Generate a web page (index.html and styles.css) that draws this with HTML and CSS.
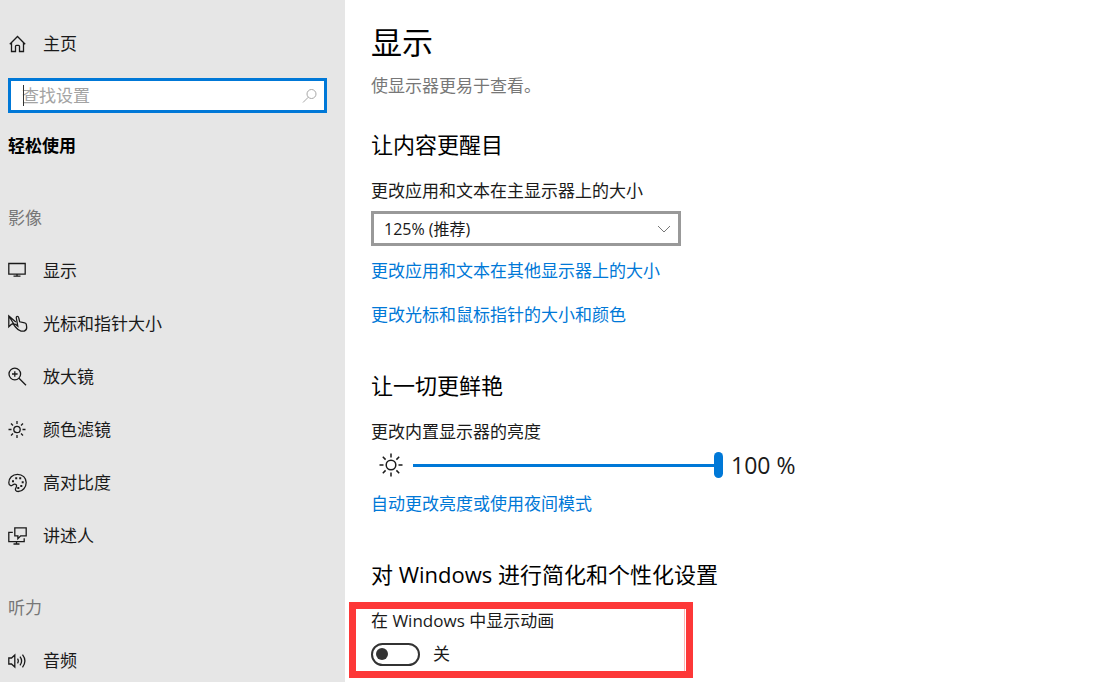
FILE: index.html
```html
<!DOCTYPE html>
<html lang="zh-CN">
<head>
    <meta charset="UTF-8">
    <meta name="viewport" content="width=device-width, initial-scale=1.0">
    <title>设置</title>
    <link rel="stylesheet" href="styles.css">
</head>
<body>
    <div class="settings">
        <nav class="sidebar">
            <a href="#" class="nav-item">
                <svg class="icon" viewBox="0 0 20 20"><path d="M1.8 10.2 9.5 2.5l7.7 7.7M3.5 8.8v8.7h4v-5.2q0-1 1-1h2q1 0 1 1v5.2h4V8.8"/></svg>
                <span>主页</span>
            </a>

            <div class="search-box">
                <input type="text" class="search-input" placeholder="查找设置" aria-label="查找设置">
                <svg class="search-icon" viewBox="0 0 16 16"><circle cx="9.5" cy="6" r="4.5"/><path d="M6.3 9.2 1 14.5"/></svg>
            </div>

            <h2 class="sidebar-title">轻松使用</h2>

            <h3 class="group-title">影像</h3>
            <ul class="nav-list">
                <li><a href="#" class="nav-item">
                    <svg class="icon" viewBox="0 0 20 20"><path d="M.8 2.5h16.4v10.7H.8zM9 13.2v2M5.5 15.2h7"/></svg>
                    <span>显示</span>
                </a></li>
                <li><a href="#" class="nav-item">
                    <svg class="icon" viewBox="0 0 20 20"><path d="M7.8 8 .8 2v10.8l2.7-2.6M.8 2l5 8H3.5"/><path d="M7.5 13 5.8 10.8q1-1.3 2.3 0l1.7 1.4L8.3 4q-.1-1.7 1-1.7t1.4 1.4l1 4.1 5 1.1q1.4.2 1.6 1.5l.4 2.8q.2 2.8-2.5 4h-3.2q-2.6-.6-5.5-4.2z"/></svg>
                    <span>光标和指针大小</span>
                </a></li>
                <li><a href="#" class="nav-item">
                    <svg class="icon" viewBox="0 0 20 20"><circle cx="6.8" cy="7" r="5.8"/><path d="m11 11.2 7 7M6.8 4.2v5.6M4 7h5.6"/></svg>
                    <span>放大镜</span>
                </a></li>
                <li><a href="#" class="nav-item">
                    <svg class="icon" viewBox="0 0 20 20"><circle cx="9" cy="9.5" r="3.2"/><path d="M9 1v3M9 15v3M.5 9.5h3M14.5 9.5h3M3 3.5l2 2M13 13.5l2 2M15 3.5l-2 2M5 13.5l-2 2"/></svg>
                    <span>颜色滤镜</span>
                </a></li>
                <li><a href="#" class="nav-item">
                    <svg class="icon" viewBox="0 0 20 20"><path d="M.8 9.7C.8 5 4.5 1.3 9.5 1.3s8.7 3.5 8.7 8.2-3.5 9-8 9c-2.8 0-3.4-2-2.3-3.6 1.2-2 .8-3.8-1.2-3.7-2 .1-2.3 2-4 1.5-1.3-.4-1.9-1.5-1.9-3z"/><path class="dots" d="M4 7.2h2v2H4zM7.2 4.2h2v2h-2zM11.2 4.2h2v2h-2zM13.7 8.2h2v2h-2zM12.3 12h2v2h-2zM9.3 14h2v2h-2z"/></svg>
                    <span>高对比度</span>
                </a></li>
                <li><a href="#" class="nav-item">
                    <svg class="icon" viewBox="0 0 20 20"><path d="M6.8 1.8h11.4v8h-5.5l-2.8 2.8V9.8H6.8zM4.8 6.3h-4v9.4h15.4v-3.4M8.5 15.7v2.5M5.5 18h6"/></svg>
                    <span>讲述人</span>
                </a></li>
            </ul>

            <h3 class="group-title">听力</h3>
            <ul class="nav-list">
                <li><a href="#" class="nav-item">
                    <svg class="icon" viewBox="0 0 20 20"><path d="M.8 7v6h2.7l3.3 3V4L3.5 7zM9.5 7.7q1.6 2.3 0 4.6M12 5.7q3.2 4.3 0 8.6M14.5 3.7q4.8 6.3 0 12.6"/></svg>
                    <span>音频</span>
                </a></li>
            </ul>
        </nav>

        <main class="content">
            <h1>显示</h1>
            <p class="intro">使显示器更易于查看。</p>

            <section>
                <h2>让内容更醒目</h2>
                <label class="field-label" for="scale">更改应用和文本在主显示器上的大小</label>
                <div class="select-box">
                    <select id="scale">
                        <option>125% (推荐)</option>
                    </select>
                    <svg class="chevron" viewBox="0 0 14 8"><path d="m1 1 6 6 6-6"/></svg>
                </div>
                <a href="#" class="link">更改应用和文本在其他显示器上的大小</a>
                <a href="#" class="link">更改光标和鼠标指针的大小和颜色</a>
            </section>

            <section>
                <h2>让一切更鲜艳</h2>
                <label class="field-label" for="brightness">更改内置显示器的亮度</label>
                <div class="slider-row">
                    <svg class="sun" viewBox="0 0 24 24"><circle cx="12" cy="12" r="4.8"/><path d="M12 .5v4M12 19.5v4M.5 12h4M19.5 12h4M3.8 3.8l2.8 2.8M17.4 17.4l2.8 2.8M20.2 3.8l-2.8 2.8M6.6 17.4l-2.8 2.8"/></svg>
                    <input type="range" id="brightness" class="slider" min="0" max="100" value="100">
                    <output class="slider-value" for="brightness">100 %</output>
                </div>
                <a href="#" class="link">自动更改亮度或使用夜间模式</a>
            </section>

            <section>
                <h2>对 Windows 进行简化和个性化设置</h2>
                <div class="highlight">
                    <div class="highlight-body">
                        <label class="field-label" for="animations">在 Windows 中显示动画</label>
                        <div class="toggle-row">
                            <input type="checkbox" id="animations" class="toggle">
                            <span>关</span>
                        </div>
                    </div>
                </div>
            </section>
        </main>
    </div>
</body>
</html>
```

FILE: styles.css
```css
* {
    margin: 0;
    padding: 0;
    box-sizing: border-box;
}

body {
    font-family: "Open Sans", "Noto Sans CJK SC", sans-serif;
    font-size: 17px;
    line-height: 24px;
    color: #1a1a1a;
    background: #fff;
}

input, select {
    font: inherit;
    color: inherit;
}

a {
    color: inherit;
    text-decoration: none;
}

svg {
    fill: none;
    stroke: currentColor;
}

.settings {
    display: flex;
    min-height: 100vh;
}

/* Sidebar */
.sidebar {
    flex: 0 0 345px;
    padding: 32px 18px 8px 8px;
    background: #e6e6e6;
}

.nav-item {
    display: flex;
    align-items: center;
    gap: 15px;
}

.icon {
    width: 20px;
    height: 20px;
    stroke-width: 1.3;
}

.dots {
    fill: currentColor;
    stroke: none;
}

.search-box {
    position: relative;
    display: flex;
    align-items: center;
    height: 35px;
    margin-top: 22px;
    padding: 0 6px 0 11px;
    background: #fff;
    border: 3px solid #0078d7;
}

/* Text cursor */
.search-box::before {
    content: '';
    position: absolute;
    left: 12px;
    top: 4px;
    width: 1px;
    height: 21px;
    background: #333;
}

.search-input {
    flex: 1;
    min-width: 0;
    border: none;
    outline: none;
    background: none;
}

.search-input::placeholder {
    color: #a3a3a3;
}

.search-icon {
    width: 16px;
    height: 16px;
    color: #a8a8a8;
}

.sidebar-title {
    margin-top: 21px;
    font-size: 17px;
    font-weight: 700;
    color: #000;
}

.group-title {
    margin: 48px 0 29px;
    font-size: 17px;
    font-weight: 400;
    color: #777;
}

.nav-list {
    display: flex;
    flex-direction: column;
    gap: 29px;
    list-style: none;
}

/* Content */
.content {
    flex: 1;
    min-width: 0;
    padding: 22px 26px 0;
}

h1 {
    font-size: 31px;
    font-weight: 400;
    line-height: 40px;
    color: #000;
}

.intro {
    margin: 12px 0 30px;
    color: #777;
}

.content section {
    margin-bottom: 42px;
}

.content section:last-child {
    margin-bottom: 0;
}

.content h2 {
    margin-bottom: 19px;
    font-size: 22px;
    font-weight: 400;
    line-height: 32px;
    color: #000;
}

.field-label {
    display: block;
}

.select-box {
    position: relative;
    max-width: 310px;
    margin: 8px 0 13px;
}

.select-box select {
    display: block;
    width: 100%;
    height: 35px;
    padding: 0 10px;
    font-size: 16px;
    appearance: none;
    background: #fff;
    border: 3px solid #999;
    border-radius: 0;
}

.chevron {
    position: absolute;
    right: 10px;
    top: 14px;
    width: 14px;
    height: 8px;
    color: #777;
    pointer-events: none;
}

.link {
    display: block;
    color: #0078d7;
}

.link + .link {
    margin-top: 20px;
}

.slider-row {
    display: flex;
    align-items: center;
    height: 26px;
    margin: 8px 0 14px 8px;
}

.sun {
    width: 24px;
    height: 24px;
    margin-right: 10px;
    stroke-width: 1.5;
}

.slider {
    flex: 0 1 310px;
    min-width: 0;
    height: 26px;
    appearance: none;
    background: linear-gradient(#0078d7, #0078d7) center / 100% 3px no-repeat;
}

.slider::-webkit-slider-thumb {
    appearance: none;
    width: 9px;
    height: 26px;
    background: #0078d7;
    border-radius: 5px;
}

.slider-value {
    margin-left: 8px;
    font-size: 23px;
}

/* Framed option */
.highlight {
    max-width: 344px;
    margin: -7px 0 0 -22px;
    padding-right: 1px;
    border: 7px solid #fd3838;
}

.highlight-body {
    padding: 0 0 5px 15px;
    border-right: 1px solid #fdb5b5;
}

.toggle-row {
    display: flex;
    align-items: center;
    gap: 13px;
    margin-top: 9px;
}

.toggle {
    display: flex;
    align-items: center;
    width: 49px;
    height: 23px;
    padding-left: 3px;
    appearance: none;
    border: 2px solid #333;
    border-radius: 12px;
}

.toggle::before {
    content: '';
    width: 12px;
    height: 12px;
    background: #333;
    border-radius: 50%;
}

.toggle:checked {
    justify-content: flex-end;
    padding: 0 3px 0 0;
    background: #0078d7;
    border-color: #0078d7;
}

.toggle:checked::before {
    background: #fff;
}
```
